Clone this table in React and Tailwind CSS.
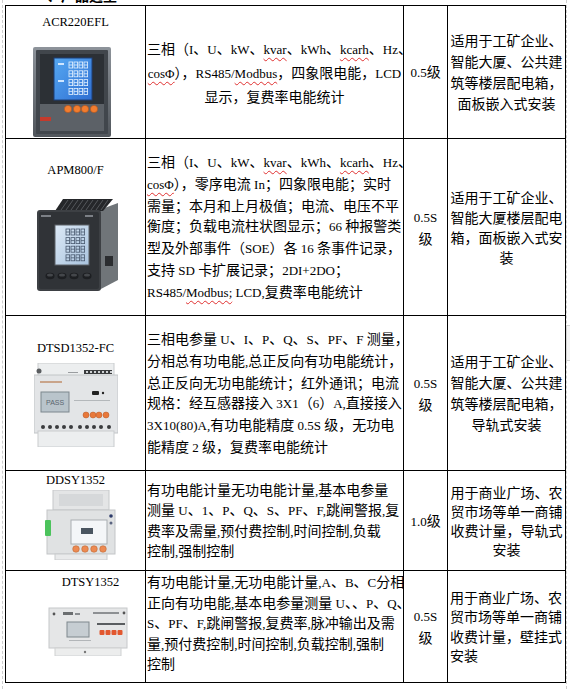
const lat = "font-['Liberation_Serif',serif] text-[13px]";
const wavy = "underline decoration-wavy decoration-[#e03030] decoration-1 underline-offset-[3px]";

function Mix({ s }) {
  return s.split("~").map((part, i) => {
    const runs = part.split(/([\x20-\x7EΦ]+)/).filter(Boolean);
    const inner = runs.map((r, j) =>
      /^[\x20-\x7EΦ]+$/.test(r) ? (
        <span key={j} className={lat}>
          {r}
        </span>
      ) : (
        <span key={j}>{r}</span>
      )
    );
    return i % 2 ? (
      <span key={i} className={wavy}>
        {inner}
      </span>
    ) : (
      <span key={i}>{inner}</span>
    );
  });
}

function Lines({ lines }) {
  return lines.map((l, i) => (
    <div key={i} className="whitespace-nowrap">
      <Mix s={l} />
    </div>
  ));
}

// small seven-segment style digit boxes
function Digits({ x, y, rows, cols, w, h, gx, gy, color }) {
  const out = [];
  for (let r = 0; r < rows; r++) {
    for (let c = 0; c < cols; c++) {
      const dx = x + c * gx;
      const dy = y + r * gy;
      out.push(
        <g key={`${r}-${c}`} stroke={color} strokeWidth="0.8" fill="none">
          <rect x={dx} y={dy} width={w} height={h} />
          <line x1={dx} y1={dy + h / 2} x2={dx + w} y2={dy + h / 2} />
        </g>
      );
    }
  }
  return out;
}

function MeterACR() {
  return (
    <svg width="78" height="90" viewBox="0 0 78 90">
      <defs>
        <linearGradient id="acrBezel" x1="0" y1="0" x2="0" y2="1">
          <stop offset="0" stopColor="#8d939a" />
          <stop offset="1" stopColor="#50555b" />
        </linearGradient>
        <linearGradient id="acrLcd" x1="0" y1="0" x2="1" y2="1">
          <stop offset="0" stopColor="#56a8f2" />
          <stop offset="1" stopColor="#2f6fd2" />
        </linearGradient>
      </defs>
      <rect x="0" y="0" width="78" height="90" rx="2" fill="url(#acrBezel)" />
      <rect x="3" y="3" width="72" height="84" rx="1" fill="#41464c" />
      <rect x="7" y="7" width="64" height="50" fill="#2c3035" />
      <rect x="21" y="11" width="38" height="42" fill="url(#acrLcd)" stroke="#1d3f78" />
      <Digits x={36} y={15} rows={4} cols={4} w={3.6} h={6} gx={5} gy={8.8} color="#e4f2ff" />
      <rect x="25" y="16" width="6" height="2" fill="#cfe6ff" />
      <rect x="25" y="33" width="6" height="2" fill="#cfe6ff" />
      <rect x="7" y="57" width="64" height="27" fill="#5c6167" />
      <rect x="7" y="70" width="11" height="4" fill="#c43a2c" />
      {[35, 44, 52, 61].map((x) => (
        <circle key={x} cx={x} cy="62" r="3.6" fill="#f27d2f" stroke="#b3541b" strokeWidth="0.6" />
      ))}
    </svg>
  );
}

function MeterAPM() {
  return (
    <svg width="82" height="94" viewBox="0 0 82 94">
      <defs>
        <linearGradient id="apmLcd" x1="0" y1="0" x2="1" y2="1">
          <stop offset="0" stopColor="#dce9f6" />
          <stop offset="1" stopColor="#a9c3de" />
        </linearGradient>
      </defs>
      <polygon points="62,12 81,5 81,82 62,92" fill="#707579" />
      <rect x="68" y="58" width="8" height="10" fill="#2b2d30" />
      <polygon points="18,13 26,1 76,1 66,13" fill="#25272a" />
      {[28, 33, 38, 43, 48, 53, 58, 63, 68].map((x) => (
        <line key={x} x1={x - 4} y1="12" x2={x + 3} y2="2" stroke="#55585c" strokeWidth="1" />
      ))}
      <rect x="0" y="12" width="64" height="81" rx="3" fill="#3d4044" />
      <rect x="2" y="14" width="60" height="77" rx="2" fill="#303337" />
      <rect x="4" y="17" width="10" height="2" fill="#7c8086" />
      <rect x="48" y="17" width="8" height="2" fill="#7c8086" />
      <rect x="18" y="27" width="34" height="40" fill="url(#apmLcd)" stroke="#5d6268" />
      <Digits x={29} y={31} rows={4} cols={4} w={3.6} h={6} gx={5} gy={8.6} color="#4a5a70" />
      {[13, 25, 37, 50].map((x) => (
        <g key={x}>
          <ellipse cx={x} cy="78" rx="4.5" ry="3.2" fill="#1d1f22" />
          <ellipse cx={x} cy="77" rx="3" ry="1.6" fill="#44474b" />
        </g>
      ))}
    </svg>
  );
}

function MeterDTSD() {
  return (
    <svg width="84" height="84" viewBox="0 0 84 84">
      <rect x="4" y="0" width="76" height="14" fill="#eceeef" stroke="#c9ccce" />
      <rect x="0" y="12" width="84" height="58" fill="#e3e5e7" stroke="#c2c5c8" />
      <rect x="4" y="68" width="76" height="16" fill="#eceeef" stroke="#c9ccce" />
      <circle cx="5" cy="8" r="2.5" fill="#5a5d60" />
      <rect x="50" y="7" width="28" height="4" fill="#3a3c3e" />
      {[52, 56, 60, 64, 68, 72, 76].map((x) => (
        <rect key={x} x={x} y="8" width="2" height="2" fill="#cfd2d4" />
      ))}
      <rect x="34" y="9" width="10" height="1" fill="#9a9da0" />
      <rect x="6" y="18" width="22" height="2" fill="#c9a48a" />
      <rect x="7" y="29" width="28" height="20" fill="#b9c4cb" stroke="#7d878e" />
      <text x="12" y="42" fontSize="7" fill="#5a6670" fontFamily="Liberation Sans, sans-serif">PASS</text>
      <rect x="58" y="28" width="7" height="4" rx="1" fill="#222" />
      <circle cx="69" cy="30" r="1.2" fill="#222" />
      <rect x="40" y="37" width="36" height="1" fill="#b4b8bb" />
      {[52, 59, 65, 72].map((x) => (
        <circle key={x} cx={x} cy="52" r="3" fill="#e8783a" stroke="#b65624" strokeWidth="0.5" />
      ))}
      {[9, 16, 23, 30, 37, 46, 53, 60, 67, 75].map((x) => (
        <circle key={x} cx={x} cy="64" r="2" fill="#3a3c3e" />
      ))}
    </svg>
  );
}

function MeterDDSY() {
  return (
    <svg width="72" height="70" viewBox="0 0 72 70">
      <rect x="8" y="0" width="56" height="20" fill="#e4e5e6" stroke="#c6c8ca" />
      <rect x="14" y="4" width="44" height="12" fill="#d6d8da" />
      <rect x="2" y="20" width="68" height="44" fill="#e0e2e3" stroke="#c3c5c7" />
      <rect x="0" y="30" width="6" height="16" rx="1" fill="#4cc35c" />
      <rect x="26" y="30" width="36" height="24" fill="#f4f6f8" stroke="#a9aeb2" />
      <rect x="36" y="38" width="12" height="6" fill="#4a5560" />
      <circle cx="66" cy="26" r="1.8" fill="#2d3b6a" />
      <circle cx="66" cy="33" r="1.5" fill="#5a6480" />
      {[31, 40, 49, 58].map((x) => (
        <circle key={x} cx={x} cy="59" r="3.3" fill="#ec8a52" stroke="#b4612f" strokeWidth="0.5" />
      ))}
      <rect x="10" y="64" width="52" height="6" fill="#e9eaeb" stroke="#c9cbcd" />
    </svg>
  );
}

function MeterDTSY() {
  return (
    <svg width="82" height="50" viewBox="0 0 82 50">
      <rect x="2" y="2" width="78" height="40" fill="#e5e6e7" stroke="#c6c8ca" />
      <rect x="8" y="42" width="66" height="8" fill="#eceded" stroke="#cfd1d2" />
      <circle cx="7" cy="8" r="1.4" fill="#555" />
      <rect x="16" y="6" width="10" height="3" fill="#6b6e70" />
      <rect x="28" y="7" width="5" height="2" fill="#8a8d90" />
      <rect x="46" y="6" width="26" height="2" fill="#8d9093" />
      <circle cx="77" cy="7" r="1.4" fill="#555" />
      <rect x="20" y="16" width="22" height="15" fill="#c6cdd2" stroke="#7f878d" />
      <rect x="50" y="17" width="28" height="2" fill="#5a5d60" />
      {[55, 61, 67, 73].map((x) => (
        <rect key={x} x={x - 2.5} y="24" width="5" height="5" rx="1" fill="#e2572e" />
      ))}
      <rect x="22" y="34" width="22" height="1" fill="#b2b5b8" />
      <circle cx="38" cy="46" r="1.2" fill="#777" />
    </svg>
  );
}

const rows = [
  {
    tr: "h-[133px]",
    nameTd: "pt-[9px]",
    shift: "",
    name: "ACR220EFL",
    gap: "mt-[18px] mr-[7px]",
    img: <MeterACR />,
    descCls: "text-center align-middle leading-[22px]",
    desc: [
      "三相（I、U、kW、~kvar~、kWh、~kcarh~、Hz、",
      "~cosΦ~），RS485/~Modbus~，四象限电能，LCD",
      "显示，复费率电能统计",
    ],
    grade: ["0.5级"],
    appCls: "text-center leading-[21px]",
    app: ["适用于工矿企业、", "智能大厦、公共建", "筑等楼层配电箱，", "面板嵌入式安装"],
  },
  {
    tr: "h-[177px]",
    nameTd: "pt-[24px]",
    shift: "",
    name: "APM800/F",
    gap: "mt-[21px] ml-[4px]",
    img: <MeterAPM />,
    descCls: "text-left align-middle leading-[20px]",
    desc: [
      "三相（I、U、kW、~kvar~、kWh、~kcarh~、Hz、",
      "~cosΦ~），零序电流 In；四象限电能；实时",
      "需量；本月和上月极值；电流、电压不平",
      "衡度；负载电流柱状图显示；66 种报警类",
      "型及外部事件（SOE）各 16 条事件记录，",
      "支持 SD 卡扩展记录；2DI+2DO；",
      "RS485/~Modbus;~ LCD,复费率电能统计",
    ],
    grade: ["0.5S", "级"],
    appCls: "text-center leading-[20px]",
    app: ["适用于工矿企业、", "智能大厦楼层配电", "箱，面板嵌入式安", "装"],
  },
  {
    tr: "h-[155px]",
    nameTd: "pt-[25px]",
    shift: "",
    name: "DTSD1352-FC",
    gap: "mt-[8px]",
    img: <MeterDTSD />,
    descCls: "text-left align-middle leading-[20px]",
    desc: [
      "三相电参量 U、I、P、Q、S、PF、F 测量，",
      "分相总有功电能,总正反向有功电能统计，",
      "总正反向无功电能统计；红外通讯；电流",
      "规格：经互感器接入 3X1（6）A,直接接入",
      "3X10(80)A,有功电能精度 0.5S 级，无功电",
      "能精度 2 级，复费率电能统计",
    ],
    grade: ["0.5S", "级"],
    appCls: "text-center leading-[21px]",
    app: ["适用于工矿企业、", "智能大厦、公共建", "筑等楼层配电箱，", "导轨式安装"],
  },
  {
    tr: "h-[100px]",
    nameTd: "pt-[5px]",
    shift: "",
    name: "DDSY1352",
    clip: true,
    gap: "mt-[3px] ml-[10px]",
    img: <MeterDDSY />,
    descCls: "text-left align-middle leading-[18.5px]",
    desc: [
      "有功电能计量无功电能计量,基本电参量",
      "测量 U、1、P、Q、S、PF、F,跳闸警报,复",
      "费率及需量,预付费控制,时间控制,负载",
      "控制,强制控制",
    ],
    grade: ["1.0级"],
    appCls: "text-center leading-[19px]",
    app: ["用于商业广场、农", "贸市场等单一商铺", "收费计量，导轨式", "安装"],
  },
  {
    tr: "h-[112px]",
    nameTd: "pt-[4px]",
    shift: "pl-[30px]",
    name: "DTSY1352",
    gap: "mt-[17px] mr-[6px]",
    img: <MeterDTSY />,
    descCls: "text-left align-top pt-[1px] leading-[18.5px]",
    desc: [
      "有功电能计量,无功电能计量,A、B、C分相",
      "正向有功电能,基本电参量测量 U、、P、Q、",
      "S、PF、F,跳闸警报,复费率,脉冲输出及需",
      "量,预付费控制,时间控制,负载控制,强制",
      "控制",
    ],
    grade: ["0.5S", "级"],
    appCls: "text-left leading-[19.5px]",
    app: ["用于商业广场、农", "贸市场等单一商铺", "收费计量，壁挂式", "安装"],
  },
];

const nameFont = "font-['Liberation_Serif',serif] text-[12.5px] leading-[14px]";

export default function App() {
  return (
    <div className="relative h-[689px] w-[570px] overflow-hidden bg-white font-['Noto_Sans_CJK_SC','Noto_Sans',sans-serif] text-[14px] text-black">
      <div className="ml-[2px] h-full w-[565px] border-x border-dashed border-[#cfcfcf]">
        <div className="h-[5px] overflow-hidden pl-[30px]">
          <div className="-mt-[14px] text-[14px] leading-[18px] font-bold">一、产品选型</div>
        </div>
        <table className="ml-[2px] w-[560px] table-fixed border-collapse">
          <colgroup>
            <col className="w-[140px]" />
            <col className="w-[258px]" />
            <col className="w-[44px]" />
            <col className="w-[118px]" />
          </colgroup>
          <tbody>
            {rows.map((r) => (
              <tr key={r.name} className={r.tr}>
                <td className={`border border-black p-0 align-top ${r.nameTd}`}>
                  <div className={`flex flex-col items-center ${r.shift}`}>
                    {r.clip ? (
                      <div className="h-[11px] overflow-hidden">
                        <div className={`-mt-[3px] ${nameFont}`}>{r.name}</div>
                      </div>
                    ) : (
                      <div className={nameFont}>{r.name}</div>
                    )}
                    <div className={r.gap}>{r.img}</div>
                  </div>
                </td>
                <td className={`border border-black px-[1px] ${r.descCls}`}>
                  <Lines lines={r.desc} />
                </td>
                <td className="border border-black p-0 text-center align-middle leading-[21px]">
                  <Lines lines={r.grade} />
                </td>
                <td className={`border border-black px-[2px] align-middle ${r.appCls}`}>
                  <Lines lines={r.app} />
                </td>
              </tr>
            ))}
          </tbody>
        </table>
      </div>
      <div className="absolute right-0 top-[325px] h-[36px] w-[4px] border-y border-l border-[#d4d4d4] bg-[#f4f4f4]" />
    </div>
  );
}
